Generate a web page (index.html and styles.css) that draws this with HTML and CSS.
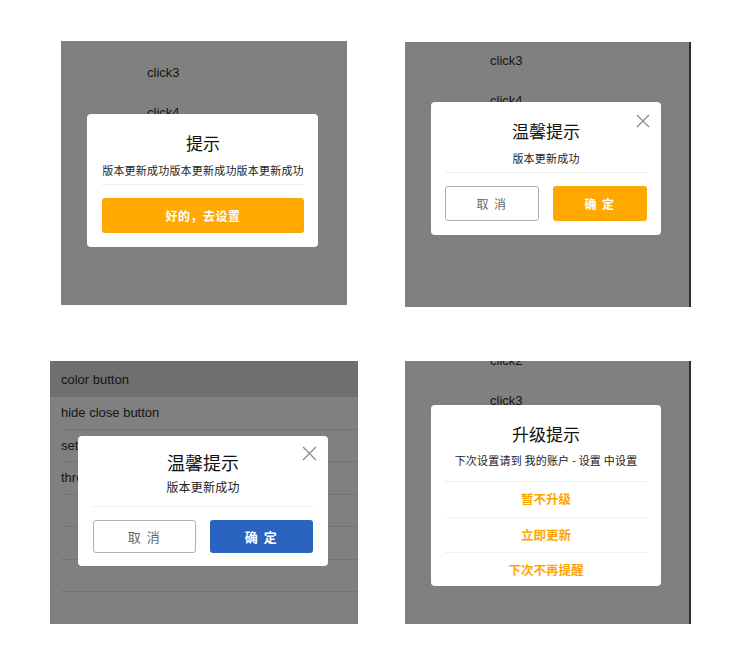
FILE: index.html
```html
<!DOCTYPE html>
<html lang="zh-CN">
<head>
<meta charset="utf-8">
<title>Dialogs</title>
<link rel="stylesheet" href="styles.css">
</head>
<body>
<div class="page">
  <div class="row row-top">
    <div class="panel p1">
      <ul class="bg-list list-a">
        <li>click3</li>
        <li>click4</li>
      </ul>
      <div class="dialog d1">
        <div class="title">提示</div>
        <div class="msg">版本更新成功版本更新成功版本更新成功</div>
        <div class="actions">
          <button class="btn btn-orange btn-full">好的，去设置</button>
        </div>
      </div>
    </div>
    <div class="panel p2 edge">
      <ul class="bg-list list-b">
        <li>click3</li>
        <li>click4</li>
      </ul>
      <div class="dialog d2">
        <svg class="close" viewBox="0 0 14 14"><path d="M1 1 L13 13 M13 1 L1 13"/></svg>
        <div class="title">温馨提示</div>
        <div class="msg">版本更新成功</div>
        <div class="actions two">
          <button class="btn btn-ghost">取 消</button>
          <button class="btn btn-orange">确 定</button>
        </div>
      </div>
    </div>
  </div>
  <div class="row row-bottom">
    <div class="panel p3">
      <div class="band">color button</div>
      <div class="item">hide close button</div>
      <div class="item">set title</div>
      <div class="item">three buttons</div>
      <div class="item"></div>
      <div class="item"></div>
      <div class="item"></div>
      <div class="dialog d3">
        <svg class="close" viewBox="0 0 14 14"><path d="M1 1 L13 13 M13 1 L1 13"/></svg>
        <div class="title">温馨提示</div>
        <div class="msg">版本更新成功</div>
        <div class="actions two">
          <button class="btn btn-ghost">取 消</button>
          <button class="btn btn-blue">确 定</button>
        </div>
      </div>
    </div>
    <div class="panel p4 edge">
      <ul class="bg-list list-c">
        <li>click2</li>
        <li>click3</li>
      </ul>
      <div class="dialog d4">
        <div class="title">升级提示</div>
        <div class="msg">下次设置请到 我的账户 - 设置 中设置</div>
        <div class="options">
          <div class="opt">暂不升级</div>
          <div class="opt">立即更新</div>
          <div class="opt">下次不再提醒</div>
        </div>
      </div>
    </div>
  </div>
</div>
</body>
</html>
```

FILE: styles.css
```css
* { box-sizing: border-box; }
html, body { margin: 0; padding: 0; background: #fff; }
body {
  width: 744px;
  height: 672px;
  overflow: hidden;
  font-family: "Liberation Sans", "Noto Sans CJK SC", sans-serif;
  color: #111;
}
.page { padding-top: 41px; }
.row { display: flex; align-items: flex-start; }
.row-top { padding-left: 61px; gap: 58px; }
.row-bottom { padding-left: 50px; gap: 47px; margin-top: 54px; }

.panel {
  position: relative;
  background: #808080;
  overflow: hidden;
}
.p1 { width: 286px; height: 264px; }
.p2 { width: 286px; height: 265px; margin-top: 1px; }
.p3 { width: 308px; height: 263px; }
.p4 { width: 286px; height: 263px; }
.edge { border-right: 2px solid #2e2e2e; }

.bg-list { list-style: none; margin: 0; padding: 0 0 0 86px; font-size: 13px; color: #151515; }
.bg-list li { height: 40px; line-height: 40px; }
.list-a { padding-top: 12px; }
.list-b { padding-top: 0; padding-left: 85px; margin-top: -1px; }
.list-c { margin-top: -20px; padding-left: 85px; }

.band {
  height: 36px;
  line-height: 38px;
  padding-left: 11px;
  background: #6f6f6f;
  font-size: 13px;
  color: #151515;
}
.item {
  margin-left: 11px;
  height: 32.5px;
  line-height: 31.5px;
  border-bottom: 1px solid #737373;
  font-size: 13px;
  color: #151515;
}

.dialog {
  position: absolute;
  background: #fff;
  border-radius: 4px;
  text-align: center;
  font-family: "Noto Sans CJK SC", "Liberation Sans", sans-serif;
}
.d1 { left: 26px; top: 73px; width: 231px; height: 133px; padding: 0 14px 0 15px; }
.d2 { left: 26px; top: 60px; width: 230px; height: 133px; padding: 0 14px; }
.d3 { left: 28px; top: 75px; width: 250px; height: 130px; padding: 0 15px; }
.d4 { left: 26px; top: 44px; width: 230px; height: 181px; padding: 0 14px; overflow: hidden; }

.title {
  padding-top: 17px;
  line-height: 24px;
  font-size: 17px;
  color: #111;
}
.msg {
  margin-top: 7px;
  line-height: 16px;
  font-size: 11px;
  letter-spacing: 0.2px;
  color: #222;
  padding-bottom: 6px;
  border-bottom: 1px solid #eeeeee;
  white-space: nowrap;
}
.d3 .title { padding-top: 14px; font-size: 18px; }
.d3 .msg { margin-top: 5px; font-size: 12px; padding-bottom: 11px; }
.d4 .msg { margin-top: 6px; padding-bottom: 13px; }

.actions { margin-top: 13px; display: flex; }
.actions.two { justify-content: space-between; }
.d3 .actions { margin-top: 13px; }

.btn {
  font-family: "Noto Sans CJK SC", "Liberation Sans", sans-serif;
  height: 35px;
  width: 94px;
  border-radius: 3px;
  font-size: 12px;
  letter-spacing: 1.5px;
  padding: 0;
  border: 1px solid transparent;
  cursor: pointer;
}
.d3 .btn { width: 103px; height: 33px; font-size: 13px; }
.btn-full { width: 100%; letter-spacing: 0.5px; }
.btn-orange { background: #ffa800; color: #fff; font-weight: 700; }
.btn-blue { background: #2a64c0; color: #fff; font-weight: 700; }
.btn-ghost { background: #fff; border-color: #b0b0b0; color: #666; }

.close {
  position: absolute;
  width: 14px;
  height: 14px;
  fill: none;
  stroke: #8a8a8a;
  stroke-width: 1.2;
}
.d2 .close { left: 205px; top: 12px; }
.d3 .close { left: 224px; top: 10px; width: 15px; height: 15px; }

.options { display: flex; flex-direction: column; }
.opt {
  height: 35px;
  line-height: 34px;
  font-size: 12.5px;
  font-weight: 700;
  color: #ffa500;
}
.opt + .opt { border-top: 1px solid #f0f0f0; line-height: 33px; }
```
